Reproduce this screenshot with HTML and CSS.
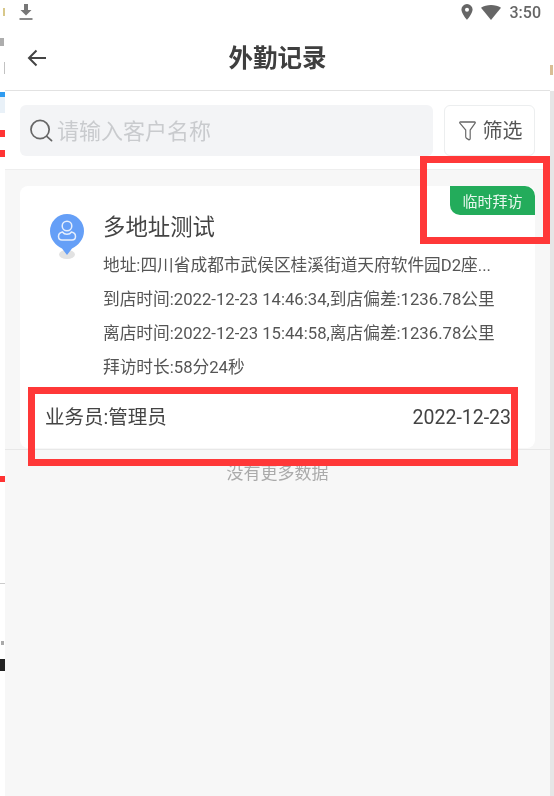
FILE: index.html
```html
<!DOCTYPE html>
<html lang="zh-CN">
<head>
<meta charset="utf-8">
<title>外勤记录</title>
<link rel="stylesheet" href="styles.css">
</head>
<body>
<div class="page">
  <div class="gutter-left">
    <i class="bit bit-a"></i><i class="bit bit-b"></i><i class="bit bit-c"></i><i class="bit bit-d"></i>
    <i class="bit bit-e"></i><i class="bit bit-f"></i><i class="bit bit-g"></i><i class="bit bit-h"></i><i class="bit bit-i"></i><i class="bit bit-j"></i><i class="bit bit-k"></i>
  </div>
  <main class="phone">
    <div class="status">
      <svg class="st-dl" viewBox="0 0 14 17"><path d="M5 0h4v6h3.500L7 11.500 1.500 6H5z" fill="#777"/><rect x="0.500" y="14" width="13" height="2" fill="#8a8a8a"/></svg>
      <div class="status-right">
        <svg class="st-pin" viewBox="0 0 12 16"><path fill-rule="evenodd" d="M6 0a5.600 5.600 0 0 1 5.600 5.600C11.600 9.600 6 16 6 16S.4 9.600.4 5.600A5.600 5.600 0 0 1 6 0zm0 3.700a2 2 0 1 0 0 4 2 2 0 0 0 0-4z" fill="#666"/></svg>
        <svg class="st-wifi" viewBox="0 0 20 15"><path d="M0 2.800C2.800 1 6.200 0 10 0s7.200 1 10 2.800L10 15z" fill="#666"/></svg>
        <span class="st-time">3:50</span>
      </div>
    </div>
    <header class="nav">
      <svg class="back" viewBox="0 0 20 18"><path d="M19 9H2M9.500 1.500 2 9l7.500 7.500" fill="none" stroke="#444" stroke-width="2"/></svg>
      <h1>外勤记录</h1>
    </header>
    <section class="search-row">
      <div class="search">
        <svg class="mag" viewBox="0 0 24 24"><circle cx="10.500" cy="10.500" r="9.500" fill="none" stroke="#666" stroke-width="1.800"/><path d="M17.500 17.500 22.500 22" fill="none" stroke="#666" stroke-width="1.800" stroke-linecap="round"/></svg>
        <span>请输入客户名称</span>
      </div>
      <div class="filter">
        <svg class="funnel" viewBox="0 0 19 20" preserveAspectRatio="none"><path d="M1.500 1h16c.6 0 .9.600.5 1.100L12.500 9v8.500c0 .9-.9 1.500-1.700 1.100l-2.300-1.200c-.6-.3-1-.9-1-1.600V9L1 2.100C.6 1.600.9 1 1.500 1z" fill="none" stroke="#666" stroke-width="1.300"/></svg>
        <span>筛选</span>
      </div>
    </section>
    <section class="list">
      <article class="card">
        <span class="tag">临时拜访</span>
        <div class="card-body">
          <svg class="avatar" viewBox="0 0 34 46">
            <ellipse cx="17" cy="40.500" rx="8" ry="4.500" fill="#e2e2e2"/>
            <path d="M17 0a17 17 0 0 1 17 17c0 8.500-6 14.500-12 17.500L17 41l-5-6.500C6 31.500 0 25.500 0 17A17 17 0 0 1 17 0z" fill="#659ff7"/>
            <circle cx="17" cy="12" r="4.800" fill="none" stroke="#e6effd" stroke-width="1.500"/>
            <path d="M12.500 18c-2.500.5-4 2.500-4 4.500 0 2 1.500 3.500 3.500 3.500h10c2 0 3.500-1.500 3.500-3.500 0-2-1.500-4-4-4.500-1 1.500-2.500 2.200-4.500 2.200s-3.500-.7-4.500-2.200z" fill="none" stroke="#e6effd" stroke-width="1.500"/>
          </svg>
          <div class="info">
            <h2>多地址测试</h2>
            <p>地址:四川省成都市武侯区桂溪街道天府软件园D2座...</p>
            <p>到店时间:2022-12-23 14:46:34,到店偏差:1236.78公里</p>
            <p>离店时间:2022-12-23 15:44:58,离店偏差:1236.78公里</p>
            <p>拜访时长:58分24秒</p>
          </div>
        </div>
        <div class="card-foot"><span>业务员:管理员</span><span>2022-12-23</span></div>
      </article>
      <div class="rule"></div>
      <div class="end">没有更多数据</div>
    </section>
  </main>
  <div class="gutter-right"><i class="bit bit-r"></i></div>
  <div class="mark mark-tag"></div>
  <div class="mark mark-foot"></div>
</div>
</body>
</html>
```
FILE: styles.css
```css
* { box-sizing: border-box; margin: 0; padding: 0; }
html, body { width: 554px; height: 796px; overflow: hidden; background: #fff; }
body { font-family: Roboto, "Noto Sans CJK SC", sans-serif; color: #444; }
.page { position: relative; display: flex; width: 554px; height: 796px; }
.gutter-left { position: relative; width: 5px; flex: none; background: #fff; }
.gutter-right { position: relative; flex: 1; background: linear-gradient(#fff 0 91px, #e6e6e6 91px); }
.phone { width: 545px; flex: none; display: flex; flex-direction: column; background: #f7f7f7; filter: blur(.35px); }
.bit { position: absolute; display: block; }
.bit-a { left: 3px; top: 8px; width: 2px; height: 8px; background: #d8c88a; }
.bit-b { left: 0; top: 38px; width: 4px; height: 8px; background: #777; opacity: .6; }
.bit-c { left: 4px; top: 62px; width: 1px; height: 12px; background: #999; opacity: .6; }
.bit-d { left: 0; top: 92px; width: 5px; height: 5px; background: #2f9bf0; }
.bit-e { left: 0; top: 97px; width: 5px; height: 16px; background: #e9f1f8; }
.bit-f { left: 0; top: 130px; width: 5px; height: 7px; background: #f33; }
.bit-g { left: 0; top: 150px; width: 5px; height: 7px; background: #f33; }
.bit-h { left: 0; top: 476px; width: 5px; height: 6px; background: #f33; }
.bit-i { left: 0; top: 583px; width: 5px; height: 1px; background: #ccc; }
.bit-j { left: 1px; top: 641px; width: 3px; height: 4px; background: #aaa; }
.bit-k { left: 0; top: 659px; width: 5px; height: 12px; background: #222; }
.bit-r { left: 0; top: 65px; width: 3px; height: 10px; background: #c9a36a; opacity: .7; }
.status { height: 26px; flex: none; display: flex; justify-content: space-between; align-items: center; padding: 0 9px 2px 14px; background: #fff; }
.st-dl { width: 14px; height: 17px; }
.status-right { display: flex; align-items: center; }
.st-pin { width: 12px; height: 16px; }
.st-wifi { width: 20px; height: 15px; margin-left: 8px; }
.st-time { margin-left: 9px; font-size: 16px; color: #666; font-weight: 500; }
.nav { position: relative; height: 65px; flex: none; display: flex; align-items: center; justify-content: center; background: #fff; border-bottom: 1px solid #e2e2e2; }
.back { position: absolute; left: 22px; top: 23px; width: 20px; height: 18px; }
.nav h1 { font-size: 24.500px; font-weight: 700; color: #3f3f3f; line-height: 1; margin-top: 2px; }
.search-row { height: 79px; flex: none; display: flex; gap: 11px; padding: 14px 15px 0; background: #fff; border-bottom: 1px solid #eeeeee; }
.search { width: 414px; height: 51px; display: flex; align-items: center; padding-left: 10px; background: #f3f4f6; border-radius: 6px; }
.mag { width: 23px; height: 24px; flex: none; }
.search span { margin: 0 0 4px 4px; font-size: 22px; color: #c9cbce; }
.filter { width: 91px; height: 51px; display: flex; align-items: center; justify-content: center; gap: 7px; padding-left: 2px; background: #fff; border: 1px solid #eceeef; border-radius: 6px; }
.funnel { width: 17px; height: 20px; }
.filter span { font-size: 20px; color: #555; margin-bottom: 2px; }
.list { flex: 1; padding: 16px 15px 0; }
.card { position: relative; height: 262px; background: #fff; border-radius: 8px; display: flex; flex-direction: column; }
.tag { position: absolute; right: 0; top: 0; width: 85px; height: 29px; display: flex; align-items: center; justify-content: center; background: #23ac5b; color: #e8f7ee; font-size: 15px; border-radius: 0 10px 0 10px; }
.card-body { display: flex; padding: 25px 0 0 30px; }
.avatar { width: 34px; height: 46px; flex: none; margin-top: 3px; }
.info { margin-left: 19px; min-width: 0; }
.info h2 { font-size: 22.400px; font-weight: 400; line-height: 32px; color: #444; white-space: nowrap; }
.info p { font-size: 16.700px; line-height: 34px; color: #555; white-space: nowrap; }
.info h2 + p { margin-top: 6px; }
.card-foot { display: flex; justify-content: space-between; padding: 20px 24px 0 25px; font-size: 19.500px; line-height: 26px; color: #444; }
.rule { height: 1px; margin: 1px -15px 0; background: #e8e8e8; }
.end { margin-top: 12px; text-align: center; font-size: 17px; line-height: 22px; color: #aaa; }
.mark { position: absolute; border: 7px solid #ff3838; }
.mark-tag { left: 420px; top: 156px; width: 130px; height: 88px; }
.mark-foot { left: 28px; top: 387px; width: 490px; height: 79px; }
```
